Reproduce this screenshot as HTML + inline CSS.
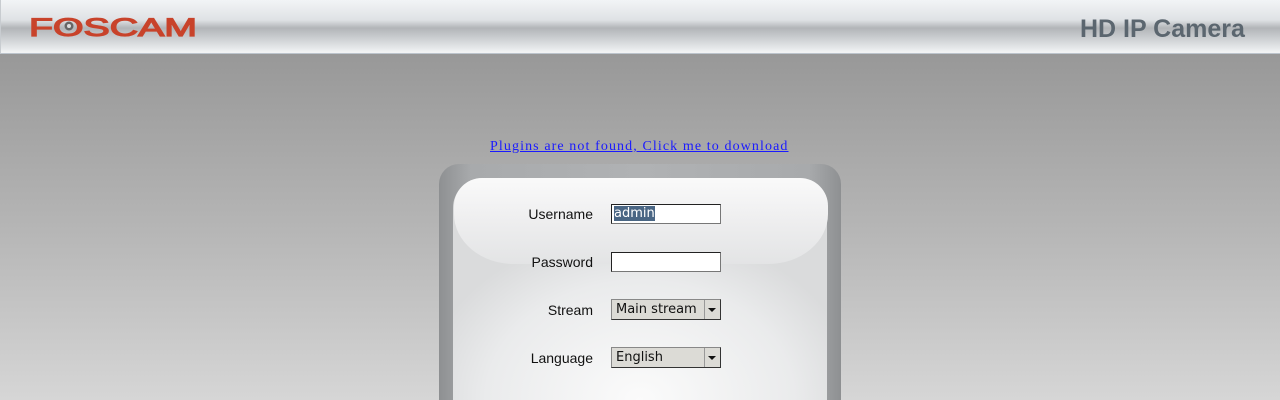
<!DOCTYPE html>
<html style="overflow:hidden;height:400px"><head><style>
*{margin:0;padding:0;box-sizing:border-box}
html,body{overflow:hidden}
body{width:1280px;height:400px;overflow:hidden;background:linear-gradient(#989898 54px,#b4b4b4 220px,#d6d6d6 400px);font-family:"Liberation Sans",sans-serif;position:relative}
#hdr{position:absolute;left:0;top:0;width:1280px;height:54px;background:linear-gradient(#f2f4f6 0px,#dfe2e5 20px,#b2b5b8 28px,#c6c9cc 36px,#e6e8ea 48px,#f2f3f4 52px);border-bottom:1px solid #bcc4cc;border-left:1px solid #c8ccd0}
#title{position:absolute;left:1079px;top:15px;font-size:25px;font-weight:bold;color:#5b666f}
#link{position:absolute;left:490px;top:139px;font-family:"Liberation Serif",serif;font-size:14px;color:#1a1aff;text-decoration:underline;letter-spacing:1.1px;white-space:nowrap}
#clip{position:absolute;left:0;top:0;width:1280px;height:400px;overflow:hidden}
#panel{position:absolute;left:439px;top:164px;width:402px;height:236px;border-radius:20px 20px 0 0;background:linear-gradient(90deg,#8e9092,#a8aaac 8%,#b0b2b4 50%,#a8aaac 92%,#8e9092)}
#inner{position:absolute;left:14px;top:14px;width:374px;height:222px;border-radius:30px 30px 0 0;background:radial-gradient(ellipse 220px 170px at 50% 100%,#fbfbfb,#eaebec 70%,#dadbdc)}
#cap{position:absolute;left:454px;top:178px;width:374px;height:86px;border-radius:28px 28px 60px 60px/28px 28px 50px 50px;background:linear-gradient(#fafafa,#eeeeef 50%,#e3e4e5)}
.lab{position:absolute;font-size:14px;color:#111;text-align:right;width:120px;left:473px}
.inp{position:absolute;left:611px;width:110px;height:20px;background:#fff;border:1px solid #777;border-top-color:#222;border-left-color:#222;font-size:13px;padding-left:2px;line-height:17px;font-family:"DejaVu Sans",sans-serif}
.sel{position:absolute;left:611px;width:110px;height:21px;background:#dcdbd6;border:1px solid #888;border-right-color:#333;border-bottom-color:#333;font-size:13px;padding-left:4px;line-height:19px;font-family:"DejaVu Sans",sans-serif;color:#111}
.sel:after{content:"";position:absolute;right:0;top:0;width:15px;height:19px;border-left:1px solid #999}
.sel i{position:absolute;right:4px;top:8px;border-left:4px solid transparent;border-right:4px solid transparent;border-top:4px solid #111}
</style></head><body>
<div id="clip">
<div id="hdr">
<svg style="position:absolute;left:27px;top:14px" width="172" height="26" viewBox="0 0 172 26">
<text x="1" y="22" font-family="Liberation Sans,sans-serif" font-size="25" fill="#c8432b" stroke="#c8432b" stroke-width="1.2" textLength="168" lengthAdjust="spacingAndGlyphs">FOSCAM</text>
<circle cx="41" cy="12" r="4.5" fill="#666"/><circle cx="41" cy="12" r="2" fill="#ddd"/>
</svg>
<div id="title">HD IP Camera</div>
</div>
<a id="link">Plugins are not found, Click me to download</a>
<div id="panel"><div id="inner"></div></div>
<div id="cap"></div>
<div class="lab" style="top:206px">Username</div>
<div class="inp" style="top:204px"><span style="background:#4a6684;color:#fff">admin</span></div>
<div class="lab" style="top:254px">Password</div>
<div class="inp" style="top:252px"></div>
<div class="lab" style="top:302px">Stream</div>
<div class="sel" style="top:299px">Main stream<i></i></div>
<div class="lab" style="top:350px">Language</div>
<div class="sel" style="top:347px">English<i></i></div>
</div>
</body></html>
